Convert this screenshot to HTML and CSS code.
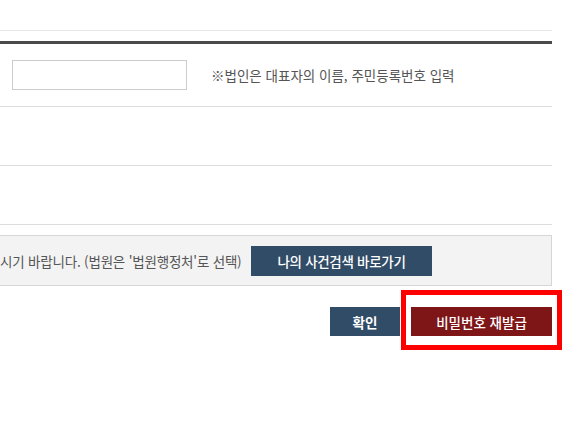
FILE: index.html
```html
<!DOCTYPE html>
<html lang="ko">
<head>
<meta charset="utf-8">
<title>비밀번호 재발급</title>
<link rel="stylesheet" href="styles.css">
</head>
<body>
<div class="page">
  <div class="prev-table"></div>
  <div class="form-table">
    <div class="row row-first">
      <input class="field" type="text">
      <span class="note">※법인은 대표자의 이름, 주민등록번호 입력</span>
    </div>
    <div class="row"></div>
    <div class="row"></div>
  </div>
  <div class="info-box">
    <div class="info-text">시기 바랍니다. (법원은 '법원행정처'로 선택)</div>
    <button class="btn btn-navy btn-search" type="button">나의 사건검색 바로가기</button>
  </div>
  <div class="actions">
    <button class="btn btn-navy btn-ok" type="button">확인</button>
    <span class="highlight-wrap">
      <button class="btn btn-red" type="button">비밀번호 재발급</button>
      <span class="highlight"></span>
    </span>
  </div>
</div>
</body>
</html>
```
FILE: styles.css
```css
html, body {
  margin: 0;
  padding: 0;
  background: #fff;
}
body {
  font-family: "Noto Sans CJK KR", "Noto Sans", sans-serif;
  font-size: 13.5px;
  color: #555;
}
.page {
  width: 552px;
  padding-bottom: 80px;
}
.prev-table {
  height: 30px;
  border-bottom: 1px solid #e6e6e6;
  margin-bottom: 10px;
}
.form-table {
  border-top: 3px solid #4a4a4a;
}
.row {
  height: 58px;
  border-bottom: 1px solid #dcdcdc;
  display: flex;
  align-items: center;
}
.row-first {
  height: 62px;
}
.field {
  box-sizing: border-box;
  width: 175px;
  height: 30px;
  margin: 0 0 0 12px;
  border: 1px solid #cccccc;
  padding: 0 6px;
  background: #fff;
}
.note {
  margin-left: 24px;
  color: #555;
}
.info-box {
  margin-top: 10px;
  height: 49px;
  border: 1px solid #d6d6d6;
  border-left: none;
  background: #f3f3f3;
  display: flex;
  align-items: center;
}
.info-text {
  width: 243px;
  white-space: nowrap;
  letter-spacing: -0.2px;
  color: #555;
}
.btn {
  border: none;
  font-family: "Noto Sans CJK KR", "Noto Sans", sans-serif;
  font-size: 13.5px;
  font-weight: 500;
  color: #fff;
  height: 30px;
  padding: 0;
  cursor: pointer;
}
.btn-navy {
  background: #314c67;
}
.btn-search {
  width: 181px;
  margin-left: 8px;
  letter-spacing: -0.3px;
}
.actions {
  margin-top: 21px;
  display: flex;
  justify-content: flex-end;
  gap: 11px;
}
.btn-ok {
  width: 70px;
  height: 29px;
  font-weight: bold;
}
.highlight-wrap {
  position: relative;
  display: block;
}
.btn-red {
  display: block;
  width: 141px;
  height: 29px;
  background: #7e1517;
}
.highlight {
  position: absolute;
  left: -10px;
  right: -10px;
  top: -17px;
  bottom: -14px;
  border: 5px solid #ff0000;
  pointer-events: none;
}
```
